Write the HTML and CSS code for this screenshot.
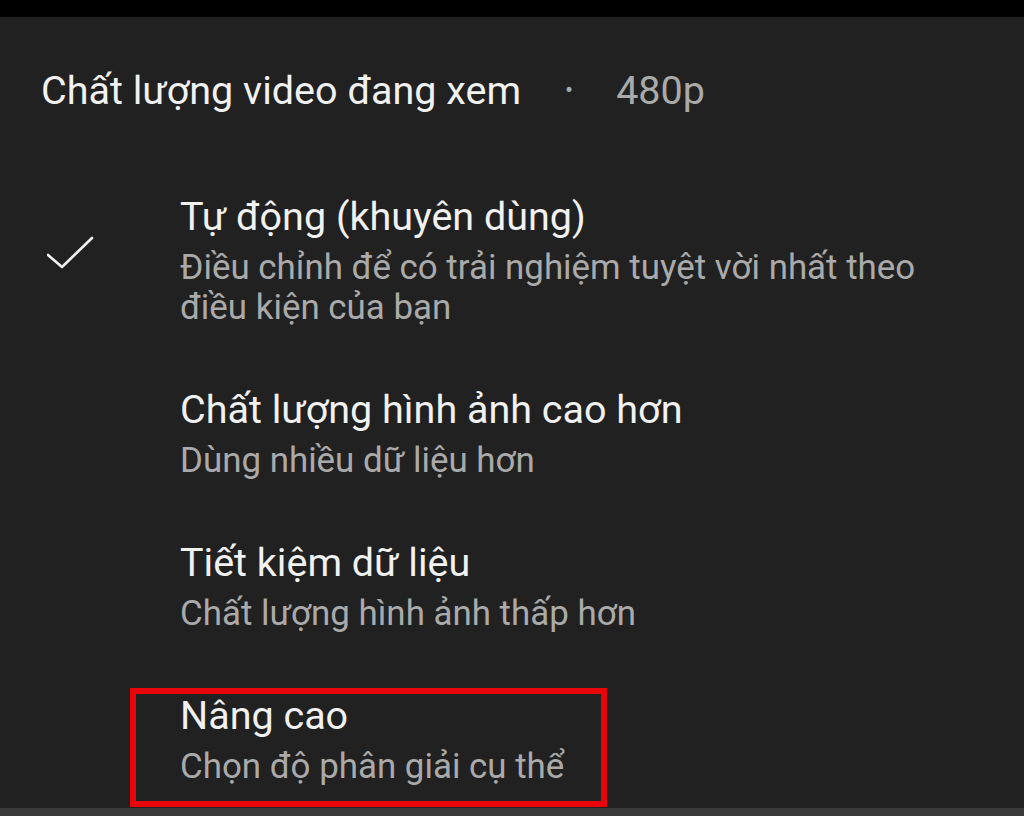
FILE: index.html
```html
<!DOCTYPE html>
<html lang="vi">
<head>
<meta charset="utf-8">
<link rel="stylesheet" href="styles.css">
</head>
<body>
<div class="topbar"></div>
<div class="sheet">
  <div class="header">
    <span class="header-title">Chất lượng video đang xem</span>
    <span class="header-dot">•</span>
    <span class="header-value">480p</span>
  </div>
  <div class="options">
    <div class="option">
      <div class="check">
        <svg width="48" height="36" viewBox="0 0 48 36"><path d="M1 21 L15 33 L45 4" fill="none" stroke="#f1f1f1" stroke-width="2.6" stroke-linecap="round" stroke-linejoin="round"/></svg>
      </div>
      <div class="text">
        <div class="title">Tự động (khuyên dùng)</div>
        <div class="sub">Điều chỉnh để có trải nghiệm tuyệt vời nhất theo<br>điều kiện của bạn</div>
      </div>
    </div>
    <div class="option">
      <div class="check"></div>
      <div class="text">
        <div class="title">Chất lượng hình ảnh cao hơn</div>
        <div class="sub">Dùng nhiều dữ liệu hơn</div>
      </div>
    </div>
    <div class="option">
      <div class="check"></div>
      <div class="text">
        <div class="title">Tiết kiệm dữ liệu</div>
        <div class="sub">Chất lượng hình ảnh thấp hơn</div>
      </div>
    </div>
    <div class="option option-last">
      <div class="check"></div>
      <div class="text">
        <div class="title">Nâng cao</div>
        <div class="sub">Chọn độ phân giải cụ thể</div>
      </div>
      <div class="highlight"></div>
    </div>
  </div>
</div>
<div class="bottombar"></div>
</body>
</html>
```
FILE: styles.css
```css
* { box-sizing: border-box; }
html, body {
  margin: 0;
  padding: 0;
  width: 1024px;
  height: 816px;
  overflow: hidden;
  background: #212121;
  font-family: Roboto, "Noto Sans", sans-serif;
  color: #f1f1f1;
}
.topbar {
  height: 17px;
  background: #000;
}
.sheet {
  height: 791px;
  overflow: hidden;
  display: flex;
  flex-direction: column;
}
.header {
  flex: none;
  display: flex;
  align-items: center;
  padding: 49px 0 0 41px;
  height: 97px;
  font-size: 39.5px;
}
.header-title { color: #f1f1f1; }
.header-dot {
  color: #aaaaaa;
  font-size: 24px;
  margin-left: 44px;
}
.header-value {
  color: #aaaaaa;
  margin-left: 43px;
}
.options {
  flex: none;
  display: flex;
  flex-direction: column;
  padding-top: 50px;
}
.option {
  flex: none;
  position: relative;
  display: flex;
  padding: 29px 0;
}
.check {
  width: 180px;
  flex: none;
  padding: 41px 0 0 47px;
}
.check svg { display: block; }
.title {
  font-size: 39.5px;
  line-height: 48px;
  color: #f1f1f1;
}
.sub {
  margin-top: 7px;
  font-size: 34.9px;
  line-height: 40px;
  color: #aaaaaa;
}
.highlight {
  position: absolute;
  left: 130px;
  top: 25px;
  width: 477px;
  height: 119px;
  border: 6px solid #e8050a;
}
.bottombar {
  height: 8px;
  background: #3a3a3a;
}
```
